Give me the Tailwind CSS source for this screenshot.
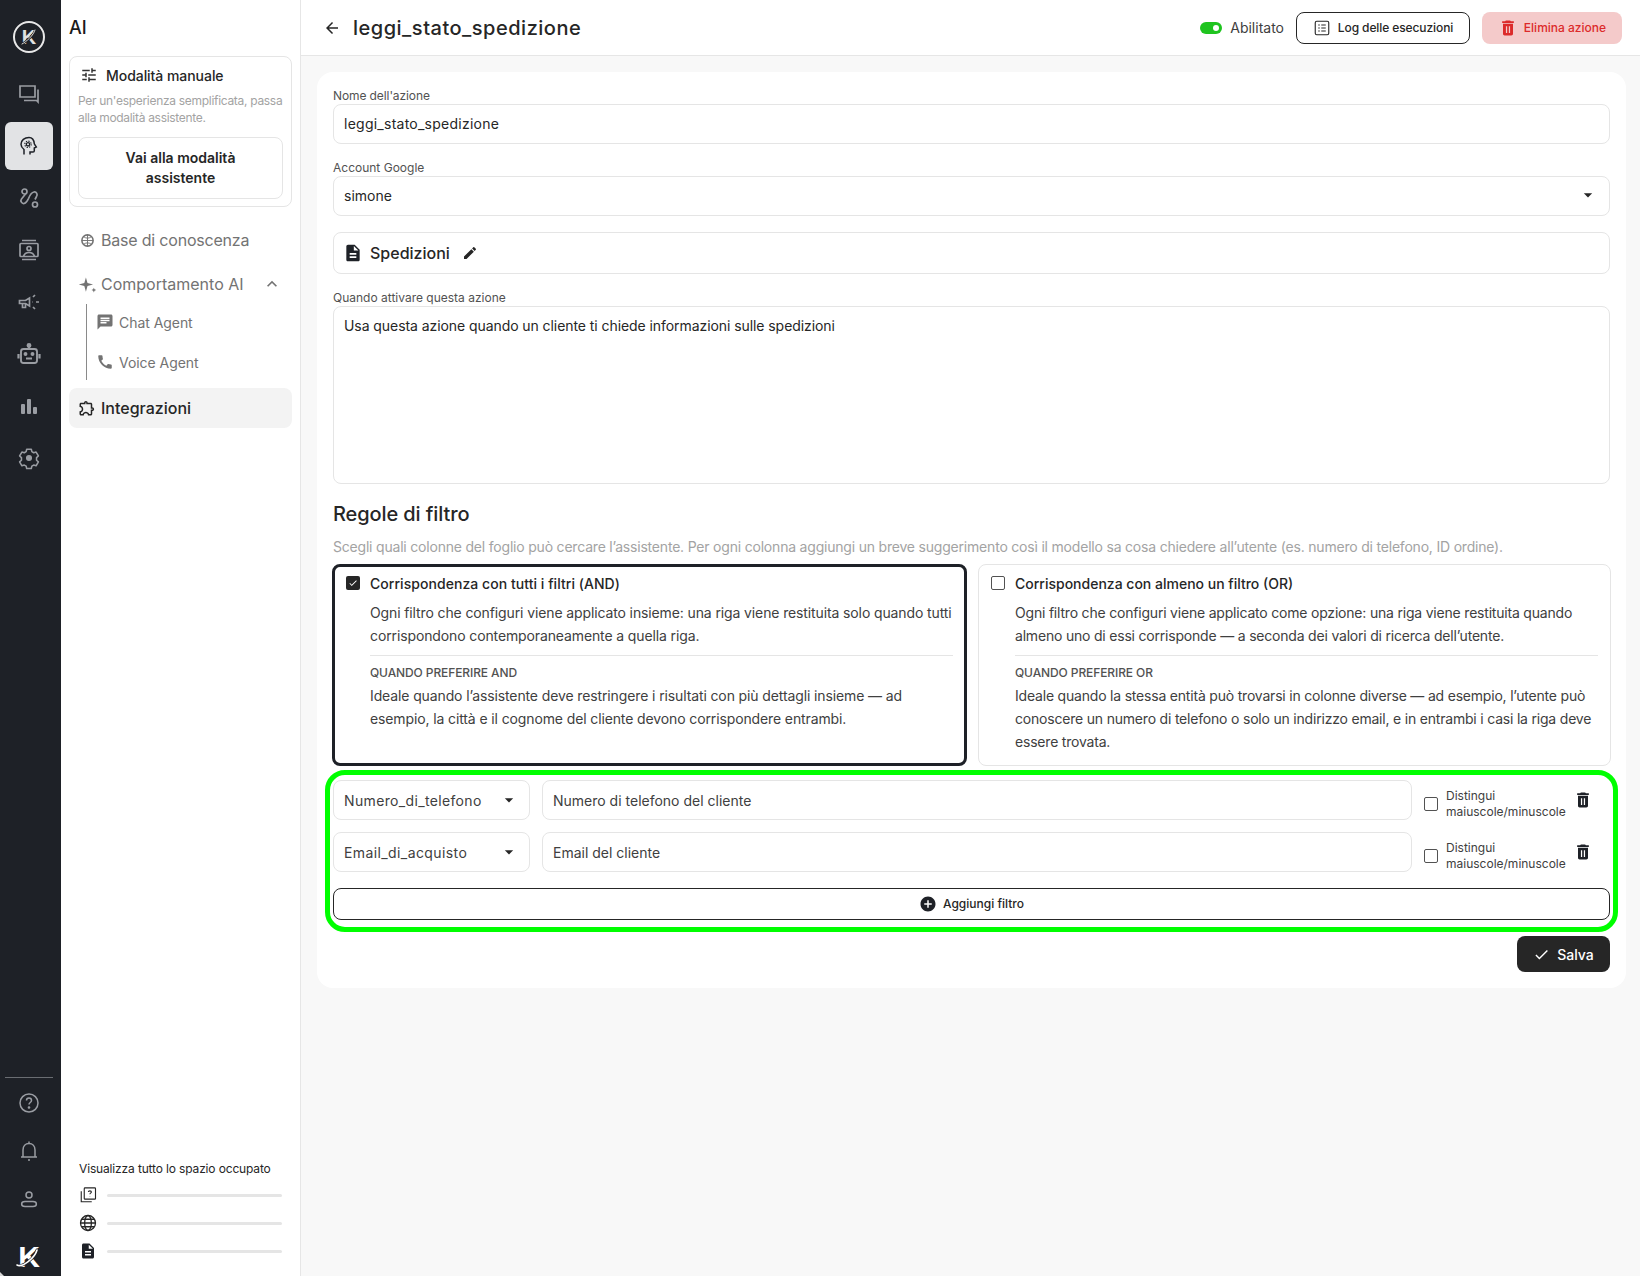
<!DOCTYPE html>
<html lang="it">

<head>
    <meta charset="UTF-8">
    <title>leggi_stato_spedizione</title>
    <script src="https://cdn.jsdelivr.net/npm/@tailwindcss/browser@4"></script>
</head>

<body class="font-['Inter',sans-serif] text-[#262626]">
    <div class="flex h-[1276px] w-[1640px] overflow-hidden">

        <!-- Rail -->
        <nav class="relative flex flex-col justify-between w-[61px] shrink-0 bg-[#1e2127] text-[#9a9da3] pl-[5px]">
            <div class="flex flex-col items-start">
                <div class="flex items-center justify-center w-8 h-8 ml-2 mt-[21px] mb-[17px] rounded-full border-2 border-[#e8e8e8] bg-[#1e2127] relative">
                    <span class="font-['Liberation_Sans',sans-serif] font-bold text-[20px] leading-none text-[#e0e0e0]">K</span>
                    <svg class="absolute size-6" viewBox="0 0 24 24" fill="none" stroke-linecap="round"><path d="M5 19C9 17 17 10 18 5" stroke="#1e2127" stroke-width="2.200" /><path d="M5 19C9 17 17 10 18 5" stroke="#d8d8d8" stroke-width="1" /></svg>
                </div>
                <div class="flex flex-col w-12 gap-1">
                    <a class="flex items-center justify-center h-12">
                        <svg class="size-6" viewBox="0 0 24 24" fill="none" stroke="currentColor" stroke-width="1.7"><path d="M3 4h15v11H3z" /><path d="M7 18.500h12.500l1.500 1.500V7.500" /></svg>
                    </a>
                    <a class="flex items-center justify-center h-12 rounded-md bg-[#e2e3e5] text-[#1e2127]">
                        <svg class="size-6" viewBox="0 0 24 24" fill="none" stroke="currentColor" stroke-width="1.5"><path d="M7 20.500V15.500C5 14 4 12.500 4 10.300 4 6.300 7.500 3.500 12 3.500c3.500 0 5 2.500 5.300 6.300l2 3.200-2 1v2.700c0 .7-.5 1.300-1.300 1.300h-3v2.500" /><circle cx="11" cy="10.300" r="1.700" stroke-width="1.300" /><circle cx="11" cy="10.300" r="3.200" stroke-width="1.100" stroke-dasharray="1.300 1.210" /></svg>
                    </a>
                    <a class="flex items-center justify-center h-12">
                        <svg class="size-6" viewBox="0 0 24 24" fill="none" stroke="currentColor" stroke-width="1.7"><circle cx="7.500" cy="5.500" r="2.500" /><circle cx="18" cy="18.500" r="2.500" /><path d="M8.500 8 4.500 13c-1.500 2 .3 5 2.700 4.500 2-.5 3-2 4.300-5 1.200-3 3-6 5.500-6.500 2.500-.4 4 2.500 2.500 4.500L18 13.500" /></svg>
                    </a>
                    <a class="flex items-center justify-center h-12">
                        <svg class="size-6" viewBox="0 0 24 24" fill="none" stroke="currentColor" stroke-width="1.7"><path d="M5 2.500h14M5 21.500h14" /><rect x="3" y="5.500" width="18" height="13" rx="1" /><circle cx="12" cy="10.500" r="2" /><path d="M6.500 18.500c.8-3 3-4 5.500-4s4.700 1 5.500 4" /></svg>
                    </a>
                    <a class="flex items-center justify-center h-12">
                        <svg class="size-6" viewBox="0 0 24 24" fill="none" stroke="currentColor" stroke-width="1.700"><path d="M2.500 10.500h6l4-2.500v8l-4-2.500h-6z" /><path d="M5.500 13.500v4h3v-4" /><path d="M15 12h0.500M19 12h3M16 7l2-2M16 17l2 2" /></svg>
                    </a>
                    <a class="flex items-center justify-center h-12">
                        <svg class="size-6" viewBox="0 0 24 24" fill="none" stroke="currentColor" stroke-width="1.900"><rect x="4" y="7" width="16" height="14" rx="2.500" /><path d="M12 7V4" /><circle cx="12" cy="3.500" r="1.500" fill="currentColor" /><path d="M1.500 12v4.500M22.500 12v4.500M9 16.500h6" stroke-width="2.200" /><circle cx="8.500" cy="12" r="1" fill="currentColor" /><circle cx="15.500" cy="12" r="1" fill="currentColor" /></svg>
                    </a>
                    <a class="flex items-center justify-center h-12">
                        <svg class="size-6" viewBox="0 0 24 24" fill="currentColor"><rect x="4" y="10" width="4" height="10" rx="1" /><rect x="10" y="5" width="4" height="15" rx="1" /><rect x="16" y="13" width="4" height="7" rx="1" /></svg>
                    </a>
                    <a class="flex items-center justify-center h-12">
                        <svg class="size-6" viewBox="0 0 24 24" fill="none" stroke="currentColor" stroke-width="1.700" stroke-linejoin="round"><path d="m9.500 2.500-.6 2.600-2 1.200-2.600-.8-2.500 4.300 2 1.800v2.800l-2 1.800 2.500 4.300 2.600-.8 2 1.200.6 2.600h5l.6-2.600 2-1.200 2.600.8 2.500-4.300-2-1.800v-2.800l2-1.800-2.500-4.300-2.600.8-2-1.200-.6-2.600z" transform="translate(12 12) scale(.92) translate(-12 -12)" /><circle cx="12" cy="12" r="2.200" fill="currentColor" /></svg>
                    </a>
                </div>
            </div>
            <div class="flex flex-col items-start">
                <div class="w-12 border-t border-[#6a6d72] mb-[1px]"></div>
                <a class="flex items-center justify-center w-12 h-12">
                    <svg class="size-6" viewBox="0 0 24 24" fill="none" stroke="currentColor" stroke-width="1.500"><circle cx="12" cy="12" r="9" /><path d="M9.500 9.500c0-3.300 5-3.300 5 0 0 2-2.500 2-2.500 4" /><circle cx="12" cy="16.500" r=".6" fill="currentColor" /></svg>
                </a>
                <a class="flex items-center justify-center w-12 h-12">
                    <svg class="size-6" viewBox="0 0 24 24" fill="none" stroke="currentColor" stroke-width="1.500"><path d="M6 18V11c0-4 2.500-6.500 6-6.500s6 2.500 6 6.500v7M4 18h16M12 2.500v2M11 21h2" /></svg>
                </a>
                <a class="flex items-center justify-center w-12 h-12">
                    <svg class="size-6" viewBox="0 0 24 24" fill="none" stroke="currentColor" stroke-width="1.500"><circle cx="12" cy="8" r="3" /><path d="M8 14.500h8c4.500 0 4.500 5 0 5H8c-4.500 0-4.500-5 0-5z" /></svg>
                </a>
                <div class="relative flex items-center justify-center w-12 h-[34px] mt-[17px] mb-[2px]">
                    <span class="font-['Liberation_Sans',sans-serif] font-bold text-[30px] leading-none text-white">K</span>
                    <svg class="absolute size-8" viewBox="0 0 32 32" fill="none" stroke-linecap="round"><path d="M4 24c5 3 18-7 20-15" stroke="#1e2127" stroke-width="3" /><path d="M4 24c5 3 18-7 20-15" stroke="white" stroke-width="1.600" /></svg>
                </div>
            </div>
            <svg class="absolute left-0 bottom-0 size-1" viewBox="0 0 4 4" fill="#d8d8d8"><path d="M0 0l4 4H0z" /></svg>
        </nav>

        <!-- Sidebar -->
        <aside class="flex flex-col justify-between w-[240px] shrink-0 bg-white border-r border-[#e6e6e6] pr-[8px] pl-[8px]">
            <div>
                <h1 class="h-[56px] pt-[16px] text-[18px] leading-[24px] font-medium text-[#1a1a1a]">AI</h1>
                <div class="w-[223px] h-[151px] border border-[#e5e5e5] rounded-lg px-2 pt-[8px]">
                    <div class="flex items-center gap-[8px] h-5 pl-[2px]">
                        <svg class="size-[18px]" viewBox="0 0 24 24" fill="#333"><path d="M3 17v2h6v-2H3zM3 5v2h10V5H3zm10 16v-2h8v-2h-8v-2h-2v6h2zM7 9v2H3v2h4v2h2V9H7zm14 4v-2H11v2h10zm-6-4h2V7h4V5h-4V3h-2v6z" /></svg>
                        <span class="text-[14px] font-medium text-[#262626] tracking-[-0.05px]">Modalità manuale</span>
                    </div>
                    <p class="mt-[8px] text-[12px] leading-[16.500px] text-[#a3a3a3] tracking-[-0.3px] whitespace-nowrap">Per un'esperienza semplificata, passa<br>alla modalità assistente.</p>
                    <button class="mt-[11px] w-[205px] h-[62px] border border-[#e5e5e5] rounded-lg text-[14px] leading-[20px] font-semibold text-[#262626] px-6">Vai alla modalità assistente</button>
                </div>
                <a class="flex items-center gap-[6px] h-5 mt-[23px] pl-[11px] text-[#737373] text-[16px] tracking-[-0.2px]">
                    <svg class="size-[15px]" viewBox="0 0 24 24" fill="none" stroke="#737373" stroke-width="2.500"><circle cx="12" cy="12" r="9" /><path d="M12 3v18M3 12h18M6 6c4 3 8 3 12 0M6 18c4-3 8-3 12 0" stroke-width="1.500" /></svg>
                    Base di conoscenza
                </a>
                <div class="flex items-center gap-[4px] h-5 mt-6 pl-[9px] pr-[10px] text-[#737373] text-[16px]">
                    <svg class="size-[19px]" viewBox="0 0 24 24" fill="#737373"><path d="M10 3l2 7 7 2-7 2-2 7-2-7-7-2 7-2zM20 16l.9 2.100L23 19l-2.100.9L20 22l-.9-2.100L17 19l2.100-.9z" /></svg>
                    <span class="flex-1">Comportamento AI</span>
                    <svg class="size-5" viewBox="0 0 24 24" fill="#737373"><path d="M12 8l-6 6 1.410 1.410L12 10.830l4.590 4.580L18 14z" /></svg>
                </div>
                <div class="ml-[17px] mt-[10px] border-l border-[#8a8a8a] h-[76px] pt-[8px] pl-[9px] text-[14px] text-[#737373] tracking-[-0.05px]">
                    <a class="flex items-center gap-[5px] h-5">
                        <svg class="size-[18px]" viewBox="0 0 24 24" fill="#737373"><path d="M20 2H4c-1.100 0-2 .9-2 2v18l4-4h14c1.100 0 2-.9 2-2V4c0-1.100-.9-2-2-2zM6 9h12v2H6V9zm8 5H6v-2h8v2zm4-6H6V6h12v2z" /></svg>
                        Chat Agent
                    </a>
                    <a class="flex items-center gap-[5px] h-5 mt-5">
                        <svg class="size-[18px]" viewBox="0 0 24 24" fill="#737373"><path d="M20.010 15.380c-1.230 0-2.420-.2-3.530-.56-.35-.12-.74-.03-1.010.24l-1.570 1.970c-2.830-1.350-5.480-3.900-6.890-6.830l1.950-1.660c.27-.28.35-.67.24-1.020-.37-1.110-.56-2.300-.56-3.530 0-.54-.45-.99-.99-.99H4.190C3.650 3 3 3.240 3 3.990 3 13.280 10.730 21 20.010 21c.71 0 .99-.63.99-1.180v-3.450c0-.54-.45-.99-.99-.99z" /></svg>
                        Voice Agent
                    </a>
                </div>
                <a class="flex items-center gap-[5px] w-[223px] h-10 mt-[8px] pl-[9px] rounded-lg bg-[#f3f3f3] text-[16px] font-medium text-[#262626]">
                    <svg class="size-[18px]" viewBox="0 0 24 24" fill="#262626"><path d="M10.500 4.500c.28 0 .5.22.5.5v2h6v6h2c.28 0 .5.22.5.5s-.22.5-.5.5h-2v6h-2.120c-.68-1.750-2.390-3-4.380-3s-3.700 1.250-4.380 3H4v-2.120c1.750-.68 3-2.390 3-4.380 0-1.990-1.240-3.700-2.990-4.380L4 7h6V5c0-.28.22-.5.5-.5m0-2C9.120 2.500 8 3.620 8 5H4c-1.100 0-1.990.9-1.990 2v3.800h.29c1.490 0 2.700 1.210 2.700 2.700s-1.210 2.700-2.700 2.700H2V20c0 1.100.9 2 2 2h3.800v-.3c0-1.490 1.210-2.700 2.700-2.700s2.700 1.210 2.700 2.700v.3H17c1.100 0 2-.9 2-2v-4c1.380 0 2.500-1.120 2.500-2.500S20.380 11 19 11V7c0-1.100-.9-2-2-2h-4c0-1.380-1.120-2.500-2.500-2.500z" /></svg>
                    Integrazioni
                </a>
            </div>
            <div class="pl-[10px] pb-[11px]">
                <p class="text-[12px] leading-[16px] text-[#262626] mb-[4px] tracking-[-0.15px]">Visualizza tutto lo spazio occupato</p>
                <div class="flex items-center gap-[10px] h-7">
                    <svg class="size-[18px] shrink-0" viewBox="0 0 24 24" fill="none" stroke="#262626" stroke-width="1.500"><rect x="7" y="2.500" width="15" height="15" rx="1" /><path d="M3 7v14h14" /><path d="M12.500 8c0-2 4-2 4 0 0 1.500-2 1.500-2 3M14.500 13.500v.5" /></svg>
                    <div class="h-[3px] w-[175px] rounded-full bg-[#e5e5e5]"></div>
                </div>
                <div class="flex items-center gap-[10px] h-7">
                    <svg class="size-[18px] shrink-0" viewBox="0 0 24 24" fill="none" stroke="#262626" stroke-width="1.700"><circle cx="12" cy="12" r="10" /><ellipse cx="12" cy="12" rx="4.500" ry="10" /><path d="M2 12h20M3.500 7h17M3.500 17h17" /></svg>
                    <div class="h-[3px] w-[175px] rounded-full bg-[#e5e5e5]"></div>
                </div>
                <div class="flex items-center gap-[10px] h-7">
                    <svg class="size-[18px] shrink-0" viewBox="0 0 24 24" fill="#1e2127"><path d="M14 2H6c-1.100 0-1.990.9-1.990 2L4 20c0 1.100.89 2 1.990 2H18c1.100 0 2-.9 2-2V8l-6-6zm2 16H8v-2h8v2zm0-4H8v-2h8v2zm-3-5V3.500L18.500 9H13z" /></svg>
                    <div class="h-[3px] w-[175px] rounded-full bg-[#e5e5e5]"></div>
                </div>
            </div>
        </aside>

        <!-- Main -->
        <main class="flex flex-col flex-1 min-w-0 bg-[#f8f8f8]">
            <header class="flex items-center h-[56px] shrink-0 bg-white border-b border-[#e6e6e6] pl-[22px] pr-[18px]">
                <svg class="size-[18px] mr-[12px] text-[#262626]" viewBox="0 0 24 24" fill="currentColor"><path d="M20 11H7.830l5.590-5.590L12 4l-8 8 8 8 1.410-1.410L7.830 13H20v-2z" /></svg>
                <h2 class="text-[20px] font-medium text-[#262626] tracking-[0.5px]">leggi_stato_spedizione</h2>
                <div class="flex items-center ml-auto">
                    <span class="flex items-center justify-end w-[22px] h-[12px] rounded-full bg-[#1fc41f] pr-[3px]"><span class="size-[6px] rounded-full bg-white"></span></span>
                    <span class="ml-2 text-[14px] text-[#404040]">Abilitato</span>
                    <button class="flex items-center justify-center gap-[7px] w-[174px] h-8 ml-3 pt-[1px] border border-[#262626] rounded-lg text-[12px] font-medium text-[#262626] tracking-[-0.1px]">
                        <svg class="size-[18px]" viewBox="0 0 24 24" fill="none" stroke="#262626" stroke-width="1.500"><rect x="3" y="3" width="18" height="18" rx="2" /><path d="M7 8h2M7 12h2M7 16h2M11 8h6M11 12h6M11 16h6" /></svg>
                        Log delle esecuzioni
                    </button>
                    <button class="flex items-center justify-center gap-[6px] w-[140px] h-8 ml-3 pt-[1px] rounded-lg bg-[#f4caca] text-[12px] font-medium text-[#dc2a2a]">
                        <svg class="size-[20px]" viewBox="0 0 24 24" fill="#dc2a2a"><path fill-rule="evenodd" d="M6 19c0 1.100.9 2 2 2h8c1.100 0 2-.9 2-2V7H6v12zm3.500-9h1.500v8H9.500v-8zm3.500 0h1.500v8H13v-8zM19 4h-3.500l-1-1h-5l-1 1H5v2h14V4z" /></svg>
                        Elimina azione
                    </button>
                </div>
            </header>

            <div class="pl-4 pr-[14px] pt-4">
                <div class="h-[916px] rounded-2xl bg-white px-4 pt-[15px]">
                    <label class="block text-[12px] leading-[17px] text-[#525252] tracking-[-0.1px]">Nome dell'azione</label>
                    <input class="block w-full h-10 pb-[2px] border border-[#e5e5e5] rounded-lg px-[10px] text-[14px] text-[#262626] tracking-[0.25px]" value="leggi_stato_spedizione">

                    <label class="block mt-[15px] text-[12px] leading-[17px] text-[#525252]">Account Google</label>
                    <div class="flex items-center justify-between h-10 pb-[2px] border border-[#e5e5e5] rounded-lg pl-[10px] pr-[11px] text-[14px]">
                        simone
                        <svg class="size-5" viewBox="0 0 24 24" fill="#262626"><path d="M7 10l5 5 5-5z" /></svg>
                    </div>

                    <div class="flex items-center h-[42px] mt-4 border border-[#e5e5e5] rounded-lg pl-[9px]">
                        <svg class="size-[20px] mr-[7px]" viewBox="0 0 24 24" fill="#1e2127"><path d="M14 2H6c-1.100 0-1.990.9-1.990 2L4 20c0 1.100.89 2 1.990 2H18c1.100 0 2-.9 2-2V8l-6-6zm2 16H8v-2h8v2zm0-4H8v-2h8v2zm-3-5V3.500L18.500 9H13z" /></svg>
                        <span class="text-[16px] font-medium text-[#262626]">Spedizioni</span>
                        <svg class="size-[16px] ml-[12px]" viewBox="0 0 24 24" fill="#262626"><path d="M3 17.250V21h3.750L17.810 9.940l-3.750-3.750L3 17.250zM20.710 7.040c.39-.39.39-1.020 0-1.410l-2.340-2.340c-.39-.39-1.020-.39-1.410 0l-1.830 1.830 3.750 3.750 1.830-1.830z" /></svg>
                    </div>

                    <label class="block mt-[15px] text-[12px] leading-[17px] text-[#525252]">Quando attivare questa azione</label>
                    <textarea class="block w-full h-[178px] border border-[#e5e5e5] rounded-lg px-[10px] py-[9px] text-[14px] leading-[20px] text-[#262626] tracking-[-0.07px] resize-none">Usa questa azione quando un cliente ti chiede informazioni sulle spedizioni</textarea>

                    <h3 class="mt-[16px] text-[20px] leading-[28px] font-medium text-[#262626] tracking-[-0.1px]">Regole di filtro</h3>
                    <p class="mt-[9px] text-[14px] leading-[20px] text-[#a3a3a3] tracking-[-0.2px] whitespace-nowrap">Scegli quali colonne del foglio può cercare l’assistente. Per ogni colonna aggiungi un breve suggerimento così il modello sa cosa chiedere all’utente (es. numero di telefono, ID ordine).</p>

                    <div class="flex gap-[11px] mt-[7px] mx-[-1px] h-[202px]">
                        <div class="w-[635px] shrink-0 border-[3px] border-[#1e2127] rounded-lg pl-[11px] pr-[11px] pt-[6px]">
                            <div class="flex items-center h-5 gap-[10px]">
                                <span class="flex items-center justify-center size-[14px] rounded-[2px] bg-[#262626]"><svg class="size-[10px]" viewBox="0 0 24 24" fill="white"><path d="M9 16.170L4.830 12l-1.420 1.410L9 19 21 7l-1.410-1.410z" /></svg></span>
                                <span class="text-[14px] font-medium text-[#262626] tracking-[0.05px]">Corrispondenza con tutti i filtri (AND)</span>
                            </div>
                            <div class="pl-6 text-[14px] leading-[23px] text-[#404040] tracking-[-0.12px]">
                                <p class="mt-[8px] pb-[8px] border-b border-[#e5e5e5]">Ogni filtro che configuri viene applicato insieme: una riga viene restituita solo quando tutti corrispondono contemporaneamente a quella riga.</p>
                                <p class="mt-[8px] text-[12px] leading-[18px] text-[#525252] font-medium tracking-[-0.1px]">QUANDO PREFERIRE AND</p>
                                <p class="mt-[2px]">Ideale quando l’assistente deve restringere i risultati con più dettagli insieme — ad esempio, la città e il cognome del cliente devono corrispondere entrambi.</p>
                            </div>
                        </div>
                        <div class="flex-1 min-w-0 border border-[#e5e5e5] rounded-lg pl-[12px] pr-[12px] pt-[8px]">
                            <div class="flex items-center h-5 gap-[10px]">
                                <span class="size-[14px] rounded-[2px] border border-[#525252]"></span>
                                <span class="text-[14px] font-medium text-[#262626]">Corrispondenza con almeno un filtro (OR)</span>
                            </div>
                            <div class="pl-6 text-[14px] leading-[23px] text-[#404040] tracking-[-0.2px]">
                                <p class="mt-[8px] pb-[8px] border-b border-[#e5e5e5]">Ogni filtro che configuri viene applicato come opzione: una riga viene restituita quando almeno uno di essi corrisponde — a seconda dei valori di ricerca dell’utente.</p>
                                <p class="mt-[8px] text-[12px] leading-[18px] text-[#525252] font-medium tracking-[-0.1px]">QUANDO PREFERIRE OR</p>
                                <p class="mt-[2px]">Ideale quando la stessa entità può trovarsi in colonne diverse — ad esempio, l’utente può conoscere un numero di telefono o solo un indirizzo email, e in entrambi i casi la riga deve essere trovata.</p>
                            </div>
                        </div>
                    </div>

                    <!-- Highlighted filter rows -->
                    <div class="mt-[4px] mx-[-8px] h-[162px] border-[5px] border-[#00ff00] rounded-[20px] px-[3px] pt-[5px]">
                        <div class="flex items-center h-10">
                            <div class="flex items-center justify-between w-[197px] h-10 shrink-0 border border-[#e5e5e5] rounded-lg pl-[10px] pr-[10px] text-[14px] text-[#404040] tracking-[0.35px]">
                                Numero_di_telefono
                                <svg class="size-5" viewBox="0 0 24 24" fill="#262626"><path d="M7 10l5 5 5-5z" /></svg>
                            </div>
                            <input class="flex-1 min-w-0 h-10 ml-3 border border-[#e5e5e5] rounded-lg px-[10px] text-[14px] text-[#404040]" value="Numero di telefono del cliente">
                            <span class="size-[14px] shrink-0 ml-3 mt-[8px] rounded-[2px] border border-[#525252]"></span>
                            <span class="w-[127px] shrink-0 ml-2 mt-[8px] text-[12px] leading-[16px] text-[#404040]">Distingui maiuscole/minuscole</span>
                            <svg class="size-[20px] shrink-0 mr-[17px]" viewBox="0 0 24 24" fill="#1e2127"><path fill-rule="evenodd" d="M6 19c0 1.100.9 2 2 2h8c1.100 0 2-.9 2-2V7H6v12zm3.500-9h1.500v8H9.500v-8zm3.500 0h1.500v8H13v-8zM19 4h-3.500l-1-1h-5l-1 1H5v2h14V4z" /></svg>
                        </div>
                        <div class="flex items-center h-10 mt-3">
                            <div class="flex items-center justify-between w-[197px] h-10 shrink-0 border border-[#e5e5e5] rounded-lg pl-[10px] pr-[10px] text-[14px] text-[#404040] tracking-[0.4px]">
                                Email_di_acquisto
                                <svg class="size-5" viewBox="0 0 24 24" fill="#262626"><path d="M7 10l5 5 5-5z" /></svg>
                            </div>
                            <input class="flex-1 min-w-0 h-10 ml-3 border border-[#e5e5e5] rounded-lg px-[10px] text-[14px] text-[#404040]" value="Email del cliente">
                            <span class="size-[14px] shrink-0 ml-3 mt-[8px] rounded-[2px] border border-[#525252]"></span>
                            <span class="w-[127px] shrink-0 ml-2 mt-[8px] text-[12px] leading-[16px] text-[#404040]">Distingui maiuscole/minuscole</span>
                            <svg class="size-[20px] shrink-0 mr-[17px]" viewBox="0 0 24 24" fill="#1e2127"><path fill-rule="evenodd" d="M6 19c0 1.100.9 2 2 2h8c1.100 0 2-.9 2-2V7H6v12zm3.500-9h1.500v8H9.500v-8zm3.500 0h1.500v8H13v-8zM19 4h-3.500l-1-1h-5l-1 1H5v2h14V4z" /></svg>
                        </div>
                        <button class="flex items-center justify-center gap-[6px] w-full h-8 mt-4 border border-[#262626] rounded-lg text-[12px] font-medium text-[#262626]">
                            <svg class="size-[18px]" viewBox="0 0 24 24" fill="#1e2127"><path d="M12 2C6.480 2 2 6.480 2 12s4.480 10 10 10 10-4.480 10-10S17.520 2 12 2zm5 11h-4v4h-2v-4H7v-2h4V7h2v4h4v2z" /></svg>
                            Aggiungi filtro
                        </button>
                    </div>

                    <div class="flex justify-end mt-[4px]">
                        <button class="flex items-center justify-center gap-[7px] w-[93px] h-9 rounded-lg bg-[#262626] text-[14px] font-medium text-white">
                            <svg class="size-[17px]" viewBox="0 0 24 24" fill="white"><path d="M9 16.170L4.830 12l-1.420 1.410L9 19 21 7l-1.410-1.410z" /></svg>
                            Salva
                        </button>
                    </div>
                </div>
            </div>
        </main>
    </div>
</body>

</html>
